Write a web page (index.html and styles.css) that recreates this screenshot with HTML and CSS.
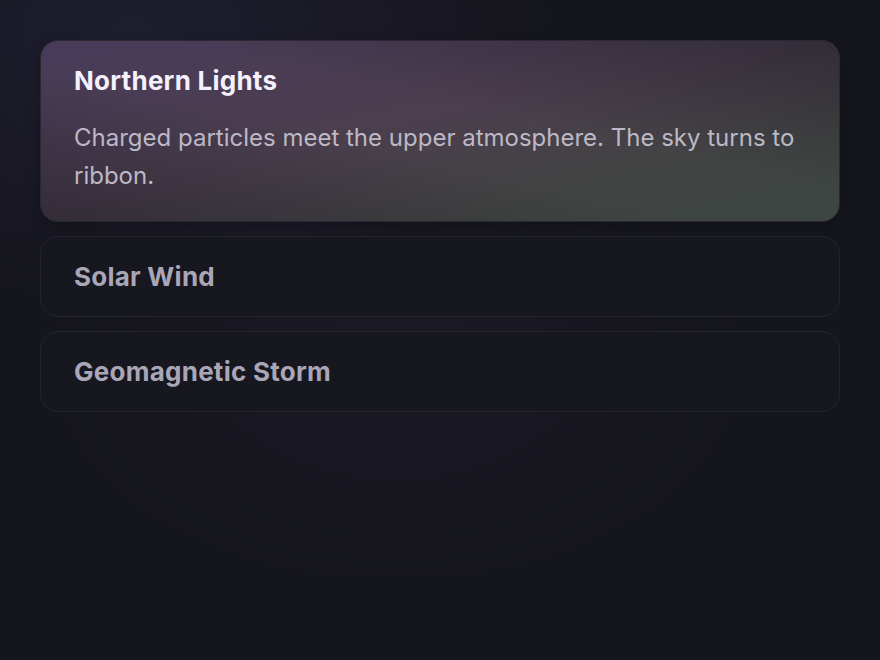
FILE: index.html
```html
<!DOCTYPE html>
<html lang="en">
<head>
<meta charset="utf-8">
<title>Aurora</title>
<link rel="stylesheet" href="styles.css">
</head>
<body>
<main class="list">
  <section class="card card--open">
    <h2 class="card-title">Northern Lights</h2>
    <p class="card-body">Charged particles meet the upper atmosphere. The sky turns to ribbon.</p>
  </section>
  <section class="card">
    <h2 class="card-title">Solar Wind</h2>
  </section>
  <section class="card">
    <h2 class="card-title">Geomagnetic Storm</h2>
  </section>
</main>
</body>
</html>
```

FILE: styles.css
```css
html, body {
  margin: 0;
  padding: 0;
  height: 100%;
}
body {
  font-family: Inter, "Noto Sans", sans-serif;
  background-color: #15151d;
  background-image:
    radial-gradient(ellipse 70% 60% at 15% 5%, rgba(40, 38, 62, 0.5), transparent 70%),
    radial-gradient(ellipse 60% 50% at 45% 55%, rgba(32, 30, 46, 0.45), transparent 70%);
}
.list {
  padding: 40px;
  display: flex;
  flex-direction: column;
  gap: 14px;
}
.card {
  border: 1px solid #24242f;
  border-radius: 18px;
  background: #17171f;
  padding: 25px 32px 24px 33px;
}
.card-title {
  margin: 0;
  font-size: 26px;
  line-height: 30px;
  font-weight: 700;
  color: #a9a6b7;
  letter-spacing: 0.25px;
}
.card--open {
  border-color: #2a2933;
  background-color: #2e2b34;
  background-image:
    linear-gradient(to top right, rgba(28, 26, 36, 0.5) 0%, rgba(28, 26, 36, 0) 42%, rgba(28, 26, 36, 0) 58%, rgba(28, 26, 36, 0.5) 100%),
    linear-gradient(to bottom right, #483b5b 0%, #4b3e4d 45%, #424443 75%, #3c4644 100%);
  box-shadow: 0 4px 14px rgba(0, 0, 0, 0.2);
  padding-bottom: 27px;
}
.card--open .card-title {
  color: #f4f0fc;
}
.card-body {
  margin: 23px 0 0;
  font-size: 24px;
  line-height: 37.5px;
  color: #bdb8c7;
}
```
